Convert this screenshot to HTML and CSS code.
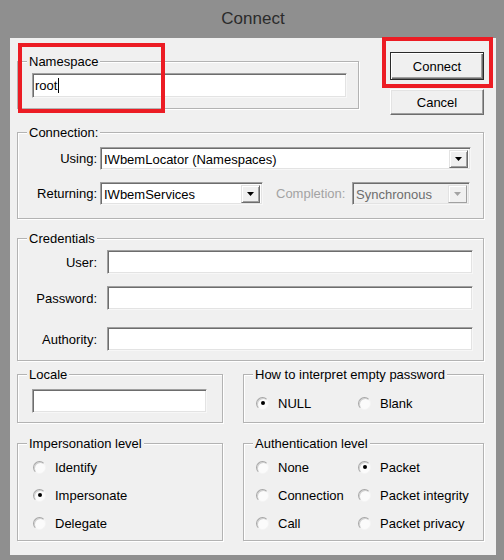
FILE: index.html
```html
<!DOCTYPE html>
<html>
<head>
<meta charset="utf-8">
<link rel="stylesheet" href="styles.css">
</head>
<body>
<div class="titlebar">Connect</div>
<div class="client">
  <div class="top">
    <fieldset class="group ns">
      <legend>Namespace</legend>
      <div class="gbody ns-body">
        <div class="edit ns-edit"><span class="val">root</span><span class="caret"></span></div>
      </div>
    </fieldset>
    <div class="btns">
      <div class="btn default">Connect</div>
      <div class="btn cancel">Cancel</div>
    </div>
  </div>

  <fieldset class="group conn">
    <legend>Connection:</legend>
    <div class="gbody conn-body">
      <div class="frow">
        <span class="flabel">Using:</span>
        <div class="combo using"><span class="ctext">IWbemLocator (Namespaces)</span><span class="cbtn"><svg width="7" height="4" viewBox="0 0 7 4"><polygon points="0,0 7,0 3.5,4" fill="#000"/></svg></span></div>
      </div>
      <div class="frow r2">
        <span class="flabel">Returning:</span>
        <div class="combo returning"><span class="ctext">IWbemServices</span><span class="cbtn"><svg width="7" height="4" viewBox="0 0 7 4"><polygon points="0,0 7,0 3.5,4" fill="#000"/></svg></span></div>
        <span class="compl">Completion:</span>
        <div class="combo sync disabled"><span class="ctext">Synchronous</span><span class="cbtn"><svg width="7" height="4" viewBox="0 0 7 4"><polygon points="0,0 7,0 3.5,4" fill="#a3a3a3"/></svg></span></div>
      </div>
    </div>
  </fieldset>

  <fieldset class="group cred">
    <legend>Credentials</legend>
    <div class="gbody cred-body">
      <div class="frow"><span class="flabel wide">User:</span><div class="edit cedit"></div></div>
      <div class="frow pw"><span class="flabel wide">Password:</span><div class="edit cedit"></div></div>
      <div class="frow au"><span class="flabel wide">Authority:</span><div class="edit cedit"></div></div>
    </div>
  </fieldset>

  <div class="bottom">
    <fieldset class="group">
      <legend>Locale</legend>
      <div class="gbody locale-body"><div class="edit locale-edit"></div></div>
    </fieldset>
    <fieldset class="group">
      <legend>How to interpret empty password</legend>
      <div class="gbody empty-body">
        <div class="rgrid one">
          <span class="radio"><span class="dot on"></span>NULL</span>
          <span class="radio"><span class="dot"></span>Blank</span>
        </div>
      </div>
    </fieldset>
    <fieldset class="group">
      <legend>Impersonation level</legend>
      <div class="gbody imp-body">
        <div class="rcol">
          <span class="radio"><span class="dot"></span>Identify</span>
          <span class="radio"><span class="dot on"></span>Impersonate</span>
          <span class="radio"><span class="dot"></span>Delegate</span>
        </div>
      </div>
    </fieldset>
    <fieldset class="group">
      <legend>Authentication level</legend>
      <div class="gbody auth-body">
        <div class="rgrid three">
          <span class="radio"><span class="dot"></span>None</span>
          <span class="radio"><span class="dot on"></span>Packet</span>
          <span class="radio"><span class="dot"></span>Connection</span>
          <span class="radio"><span class="dot"></span>Packet integrity</span>
          <span class="radio"><span class="dot"></span>Call</span>
          <span class="radio"><span class="dot"></span>Packet privacy</span>
        </div>
      </div>
    </fieldset>
  </div>
</div>
<div class="mark mark-ns"></div>
<div class="mark mark-btn"></div>
</body>
</html>
```
FILE: styles.css
```css
html, body {
  margin: 0;
  padding: 0;
}
body {
  width: 504px;
  height: 560px;
  background: #8f8f8f;
  font-family: "Liberation Sans", Arial, sans-serif;
  font-size: 13px;
  color: #000;
  position: relative;
  overflow: hidden;
}
.titlebar {
  height: 38px;
  line-height: 38px;
  text-align: center;
  font-size: 17px;
  color: #2b2b2b;
  padding-left: 2px;
  box-sizing: border-box;
}
.client {
  margin: 0 8px 0 10px;
  height: 517px;
  background: #f0f0f0;
  box-sizing: border-box;
  padding: 14px 12px 0 7px;
}
.top {
  display: flex;
  align-items: flex-start;
}
fieldset.group {
  margin: 0;
  padding: 0;
  min-width: 0;
  border: 1px solid #b3b3b3;
  box-shadow: inset 1px 1px 0 #fff, 1px 1px 0 #fff;
}
fieldset.group legend {
  margin-left: 9px;
  padding: 0 2px;
  line-height: 15px;
  font-size: 13px;
  background: #f0f0f0;
}
fieldset.group.ns {
  margin-top: 2px;
  width: 344px;
  box-sizing: border-box;
}
.ns-body {
  padding: 4px 0 10px 14px;
}
.edit {
  box-sizing: border-box;
  background: #fff;
  border: 1px solid;
  border-color: #a0a0a0 #f7f7f7 #f7f7f7 #a0a0a0;
  box-shadow: inset 1px 1px 0 #6d6d6d, inset -1px -1px 0 #e3e3e3;
}
.ns-edit {
  width: 315px;
  height: 25px;
  display: flex;
  align-items: center;
  padding-left: 2px;
}
.caret {
  display: inline-block;
  width: 1px;
  height: 15px;
  background: #000;
  margin-left: 1px;
}
.btns {
  margin-left: 31px;
  display: flex;
  flex-direction: column;
}
.btn {
  width: 94px;
  box-sizing: border-box;
  display: flex;
  align-items: center;
  justify-content: center;
  background: #f0f0f0;
  border: 1px solid;
  border-color: #fff #6d6d6d #6d6d6d #fff;
  box-shadow: inset -1px -1px 0 #a0a0a0, inset 1px 1px 0 #e3e3e3;
}
.btn.default {
  height: 28px;
  border-color: #2a2a2a;
  box-shadow: inset 1px 1px 0 #fff, inset -1px -1px 0 #6d6d6d, inset -2px -2px 0 #a0a0a0;
}
.btn.cancel {
  height: 26px;
  margin-top: 9px;
}
fieldset.group.conn {
  margin-top: 10px;
}
.conn-body {
  padding: 7px 0 13px 0;
}
.frow {
  display: flex;
  align-items: center;
}
.frow.r2 {
  margin-top: 12px;
}
.flabel {
  width: 79px;
  text-align: right;
  margin-right: 3px;
  flex: none;
}
.flabel.wide {
  margin-right: 10px;
}
.combo {
  box-sizing: border-box;
  height: 23px;
  display: flex;
  align-items: stretch;
  background: #fff;
  border: 1px solid;
  border-color: #a0a0a0 #f7f7f7 #f7f7f7 #a0a0a0;
  box-shadow: inset 1px 1px 0 #6d6d6d, inset -1px -1px 0 #e3e3e3;
  padding: 2px 2px 1px 2px;
  flex: none;
}
.ctext {
  flex: 1;
  display: flex;
  align-items: center;
  padding-left: 1px;
  white-space: nowrap;
  overflow: hidden;
}
.cbtn {
  width: 19px;
  box-sizing: border-box;
  display: flex;
  align-items: center;
  justify-content: center;
  background: #f0f0f0;
  border: 1px solid;
  border-color: #e3e3e3 #6d6d6d #6d6d6d #e3e3e3;
  box-shadow: inset 1px 1px 0 #fff, inset -1px -1px 0 #a0a0a0;
}
.using {
  width: 371px;
}
.returning {
  width: 163px;
}
.compl {
  margin-left: 13px;
  width: 76px;
  color: #a3a3a3;
  flex: none;
}
.sync {
  width: 118px;
}
.combo.disabled {
  background: #f0f0f0;
}
.combo.disabled .ctext {
  color: #6d6d6d;
}
.combo.disabled .cbtn {
  border-color: #e3e3e3 #a0a0a0 #a0a0a0 #e3e3e3;
  box-shadow: inset 1px 1px 0 #fff;
}
fieldset.group.cred {
  margin-top: 12px;
}
.cred-body {
  padding: 4px 0 9px 0;
}
.cedit {
  width: 366px;
  height: 24px;
}
.frow.pw {
  margin-top: 12px;
}
.frow.au {
  margin-top: 17px;
}
.bottom {
  margin-top: 6px;
  display: grid;
  grid-template-columns: 206px 241px;
  column-gap: 20px;
  row-gap: 13px;
}
.locale-body {
  padding: 7px 0 9px 14px;
}
.locale-edit {
  width: 175px;
  height: 24px;
}
.empty-body {
  padding: 14px 0 0 12px;
}
.imp-body {
  padding: 9px 0 10px 15px;
}
.auth-body {
  padding: 9px 0 10px 12px;
}
.rgrid {
  display: grid;
  grid-template-columns: 102px auto;
  row-gap: 14px;
}
.rcol {
  display: flex;
  flex-direction: column;
  gap: 14px;
}
.radio {
  display: flex;
  align-items: center;
  height: 14px;
  white-space: nowrap;
}
.dot {
  width: 13px;
  height: 13px;
  box-sizing: border-box;
  border-radius: 50%;
  margin-right: 9px;
  flex: none;
  background: #fbfbfb;
  border: 1px solid;
  border-color: #a6a6a6 #f4f4f4 #f4f4f4 #a6a6a6;
  box-shadow: inset 1px 1px 0 #d0d0d0;
  display: flex;
  align-items: center;
  justify-content: center;
}
.dot.on::after {
  content: "";
  width: 4px;
  height: 4px;
  border-radius: 50%;
  background: #000;
}
.mark {
  position: absolute;
  box-sizing: border-box;
  border: 4px solid #ec1c24;
}
.mark-ns {
  left: 18px;
  top: 43px;
  width: 147px;
  height: 70px;
}
.mark-btn {
  left: 382px;
  top: 37px;
  width: 111px;
  height: 51px;
}
```
